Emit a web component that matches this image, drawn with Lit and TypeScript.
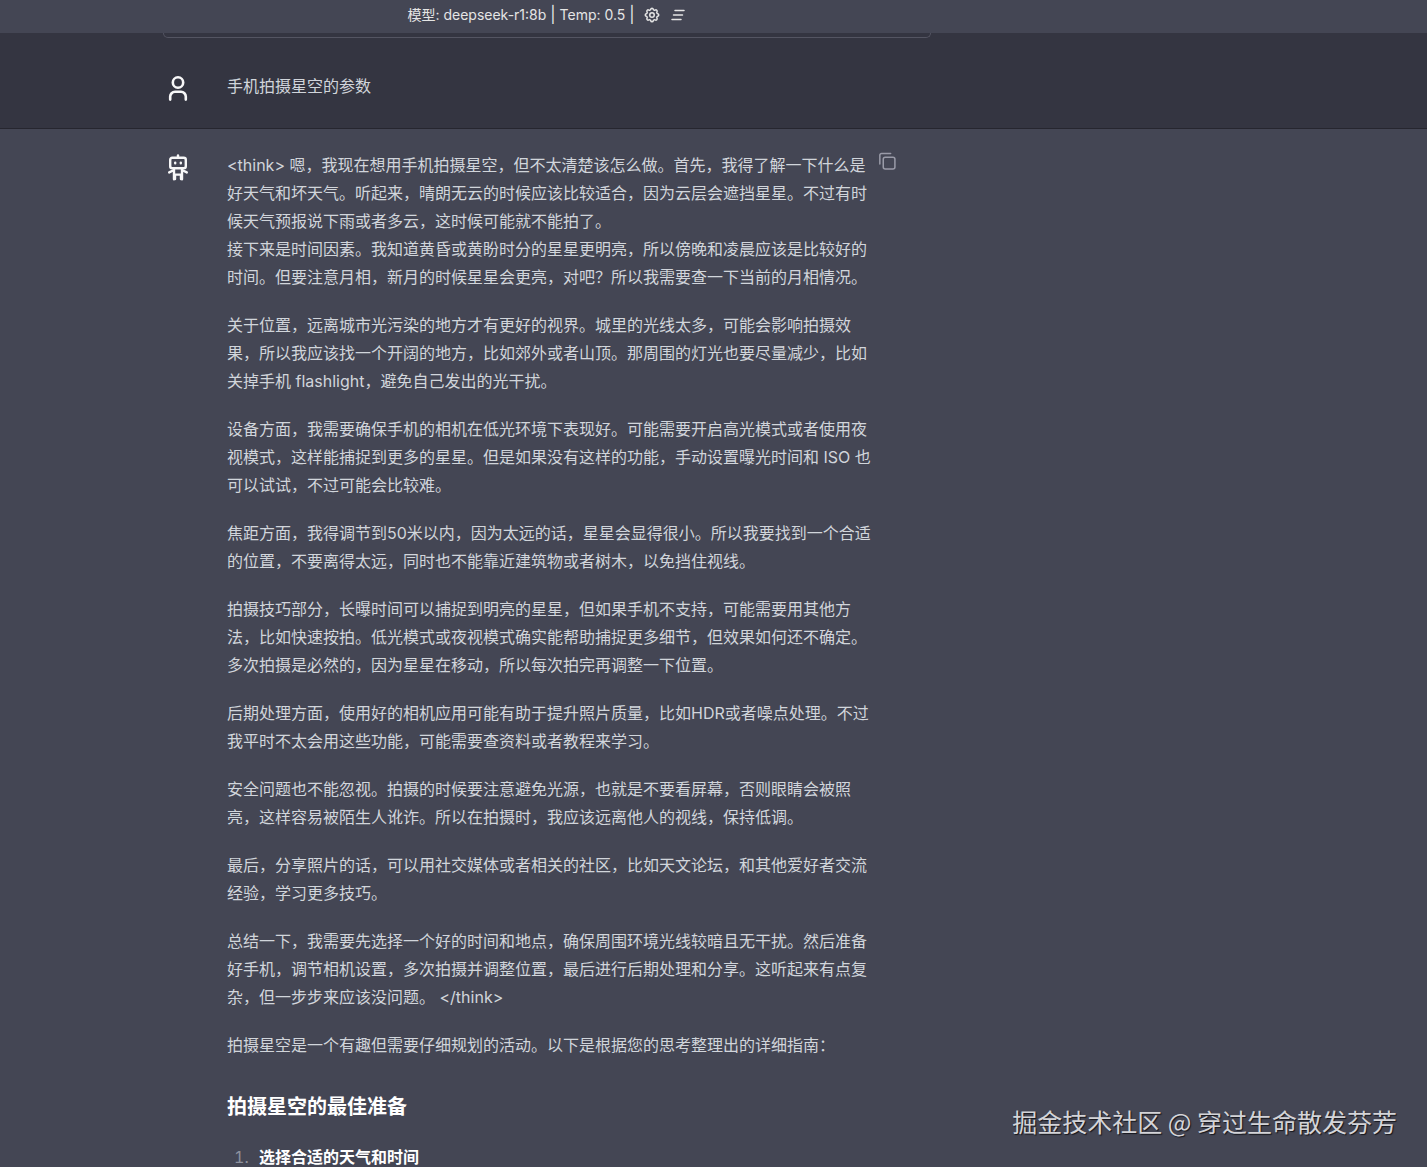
import { LitElement, html, css, svg } from "lit";
import { customElement } from "lit/decorators.js";

const paragraphs: string[][] = [
  [
    "<think> 嗯，我现在想用手机拍摄星空，但不太清楚该怎么做。首先，我得了解一下什么是好天气和坏天气。听起来，晴朗无云的时候应该比较适合，因为云层会遮挡星星。不过有时候天气预报说下雨或者多云，这时候可能就不能拍了。",
    "接下来是时间因素。我知道黄昏或黄盼时分的星星更明亮，所以傍晚和凌晨应该是比较好的时间。但要注意月相，新月的时候星星会更亮，对吧？所以我需要查一下当前的月相情况。",
  ],
  ["关于位置，远离城市光污染的地方才有更好的视界。城里的光线太多，可能会影响拍摄效果，所以我应该找一个开阔的地方，比如郊外或者山顶。那周围的灯光也要尽量减少，比如关掉手机 flashlight，避免自己发出的光干扰。"],
  ["设备方面，我需要确保手机的相机在低光环境下表现好。可能需要开启高光模式或者使用夜视模式，这样能捕捉到更多的星星。但是如果没有这样的功能，手动设置曝光时间和 ISO 也可以试试，不过可能会比较难。"],
  ["焦距方面，我得调节到50米以内，因为太远的话，星星会显得很小。所以我要找到一个合适的位置，不要离得太远，同时也不能靠近建筑物或者树木，以免挡住视线。"],
  ["拍摄技巧部分，长曝时间可以捕捉到明亮的星星，但如果手机不支持，可能需要用其他方法，比如快速按拍。低光模式或夜视模式确实能帮助捕捉更多细节，但效果如何还不确定。多次拍摄是必然的，因为星星在移动，所以每次拍完再调整一下位置。"],
  ["后期处理方面，使用好的相机应用可能有助于提升照片质量，比如HDR或者噪点处理。不过我平时不太会用这些功能，可能需要查资料或者教程来学习。"],
  ["安全问题也不能忽视。拍摄的时候要注意避免光源，也就是不要看屏幕，否则眼睛会被照亮，这样容易被陌生人讹诈。所以在拍摄时，我应该远离他人的视线，保持低调。"],
  ["最后，分享照片的话，可以用社交媒体或者相关的社区，比如天文论坛，和其他爱好者交流经验，学习更多技巧。"],
  ["总结一下，我需要先选择一个好的时间和地点，确保周围环境光线较暗且无干扰。然后准备好手机，调节相机设置，多次拍摄并调整位置，最后进行后期处理和分享。这听起来有点复杂，但一步步来应该没问题。 </think>"],
  ["拍摄星空是一个有趣但需要仔细规划的活动。以下是根据您的思考整理出的详细指南："],
];

const userIcon = svg`<svg class="avatar" viewBox="0 0 30 30" fill="none" stroke="currentColor" stroke-width="2.6" stroke-linecap="round" stroke-linejoin="round" aria-hidden="true">
  <circle cx="15" cy="8.5" r="5.2"/>
  <path d="M7.2 25.6v-3a4.8 4.8 0 0 1 4.8-4.8h6a4.8 4.8 0 0 1 4.8 4.8v3"/>
</svg>`;

const botIcon = svg`<svg class="avatar" viewBox="0 0 30 30" fill="none" stroke="currentColor" stroke-width="2.4" stroke-linecap="round" stroke-linejoin="round" aria-hidden="true">
  <path d="M15 2.4v2.4"/>
  <rect x="7.2" y="4.8" width="15.6" height="10.4" rx="2"/>
  <path d="M12.2 9.6v.6M17.8 9.6v.6"/>
  <path d="M11 15.4v10.8M19 15.4v10.8M10.6 17.2L6.2 19.4M19.4 17.2l4.4 2.2M11 21.6h8M12 22v4M18 22v4"/>
</svg>`;

const gearIcon = svg`<svg viewBox="0 0 24 24" width="18" height="18" fill="none" stroke="currentColor" stroke-width="2" stroke-linecap="round" stroke-linejoin="round" aria-hidden="true">
  <path d="M10.325 4.317c.426 -1.756 2.924 -1.756 3.35 0a1.724 1.724 0 0 0 2.573 1.066c1.543 -.94 3.31 .826 2.37 2.37a1.724 1.724 0 0 0 1.065 2.572c1.756 .426 1.756 2.924 0 3.35a1.724 1.724 0 0 0 -1.066 2.573c.94 1.543 -.826 3.31 -2.37 2.37a1.724 1.724 0 0 0 -2.572 1.065c-.426 1.756 -2.924 1.756 -3.35 0a1.724 1.724 0 0 0 -2.573 -1.066c-1.543 .94 -3.31 -.826 -2.37 -2.37a1.724 1.724 0 0 0 -1.065 -2.572c-1.756 -.426 -1.756 -2.924 0 -3.35a1.724 1.724 0 0 0 1.066 -2.573c-.94 -1.543 .826 -3.31 2.37 -2.37c1 .608 2.296 .07 2.572 -1.065z"/>
  <circle cx="12" cy="12" r="3"/>
</svg>`;

const clearIcon = svg`<svg viewBox="0 0 24 24" width="18" height="18" fill="none" stroke="currentColor" stroke-width="2" stroke-linecap="round" aria-hidden="true">
  <path d="M8 6h12M6 12h12M4 18h12"/>
</svg>`;

const copyIcon = svg`<svg viewBox="0 0 24 24" width="20" height="20" fill="none" stroke="currentColor" stroke-width="1.8" stroke-linecap="round" stroke-linejoin="round" aria-hidden="true">
  <rect x="7.5" y="7.5" width="14" height="14" rx="2.4"/>
  <path d="M3.4 15.5V5a2 2 0 0 1 2-2h11"/>
</svg>`;

@customElement("app-root")
export class AppRoot extends LitElement {
  static styles = css`
    :host {
      display: flex;
      flex-direction: column;
      height: 100vh;
      overflow: hidden;
      position: relative;
      background: #444654;
      color: #d1d5db;
      font: 16px/28px Inter, "Noto Sans CJK SC", sans-serif;
      text-spacing-trim: space-all;
    }
    .bar {
      display: flex;
      flex: none;
      justify-content: center;
      align-items: center;
      gap: 8px;
      box-sizing: border-box;
      height: 33px;
      padding: 0 333px 4px 0;
      font-size: 14px;
      line-height: 20px;
      color: #e5e5e5;
    }
    .divider {
      font-size: 16px;
    }
    button {
      display: flex;
      padding: 0;
      border: 0;
      background: none;
      color: inherit;
      cursor: pointer;
    }
    .row {
      flex: none;
      padding-right: 333px;
    }
    .question {
      background: #343541;
      border-bottom: 1px solid #26262f;
    }
    .previous {
      box-sizing: border-box;
      max-width: 768px;
      height: 5px;
      margin: 0 auto;
      border: 1px solid #545562;
      border-top: 0;
      border-radius: 0 0 6px 6px;
    }
    .inner {
      display: flex;
      box-sizing: border-box;
      max-width: 768px;
      margin: 0 auto;
    }
    .question .inner {
      padding: 34px 0 24px;
    }
    .answer .inner {
      padding-top: 22px;
    }
    .avatar-cell {
      flex: none;
      width: 64px;
      padding-top: 2px;
    }
    .avatar {
      display: block;
      width: 30px;
      height: 30px;
      color: #f7f7f8;
    }
    .body {
      flex: 0 1 650px;
      min-width: 0;
    }
    .copy {
      flex: none;
      align-self: flex-start;
      color: #9a9ba8;
    }
    p {
      margin: 0 0 20px;
    }
    h3 {
      margin: 32px 0 12px;
      font-size: 20px;
      line-height: 32px;
      font-weight: 700;
      color: #fff;
    }
    ol {
      margin: 20px 0;
      padding-left: 26px;
    }
    li {
      padding-left: 6px;
    }
    li::marker {
      color: #8e919e;
    }
    strong {
      font-weight: 700;
      color: #fff;
    }
    .watermark {
      position: absolute;
      right: 30px;
      bottom: 28px;
      font-size: 25px;
      line-height: 36px;
      font-family: "Noto Sans CJK SC", sans-serif;
      color: #d4d4d8;
      text-shadow: 1px 1px 1px #16161c;
    }
  `;

  render() {
    return html`
      <header class="bar">
        <span>模型: deepseek-r1:8b <span class="divider">|</span> Temp: 0.5 <span class="divider">|</span></span>
        <button aria-label="设置">${gearIcon}</button>
        <button aria-label="清除">${clearIcon}</button>
      </header>
      <section class="row question">
        <div class="previous"></div>
        <div class="inner">
          <div class="avatar-cell">${userIcon}</div>
          <div class="body">手机拍摄星空的参数</div>
        </div>
      </section>
      <section class="row answer">
        <div class="inner">
          <div class="avatar-cell">${botIcon}</div>
          <article class="body">
            ${paragraphs.map(
              (lines) => html`<p>${lines.map((line, i) => (i ? html`<br />${line}` : line))}</p>`,
            )}
            <h3>拍摄星空的最佳准备</h3>
            <ol>
              <li><strong>选择合适的天气和时间</strong></li>
            </ol>
          </article>
          <button class="copy" aria-label="复制">${copyIcon}</button>
        </div>
      </section>
      <div class="watermark">掘金技术社区 @ 穿过生命散发芬芳</div>
    `;
  }
}
